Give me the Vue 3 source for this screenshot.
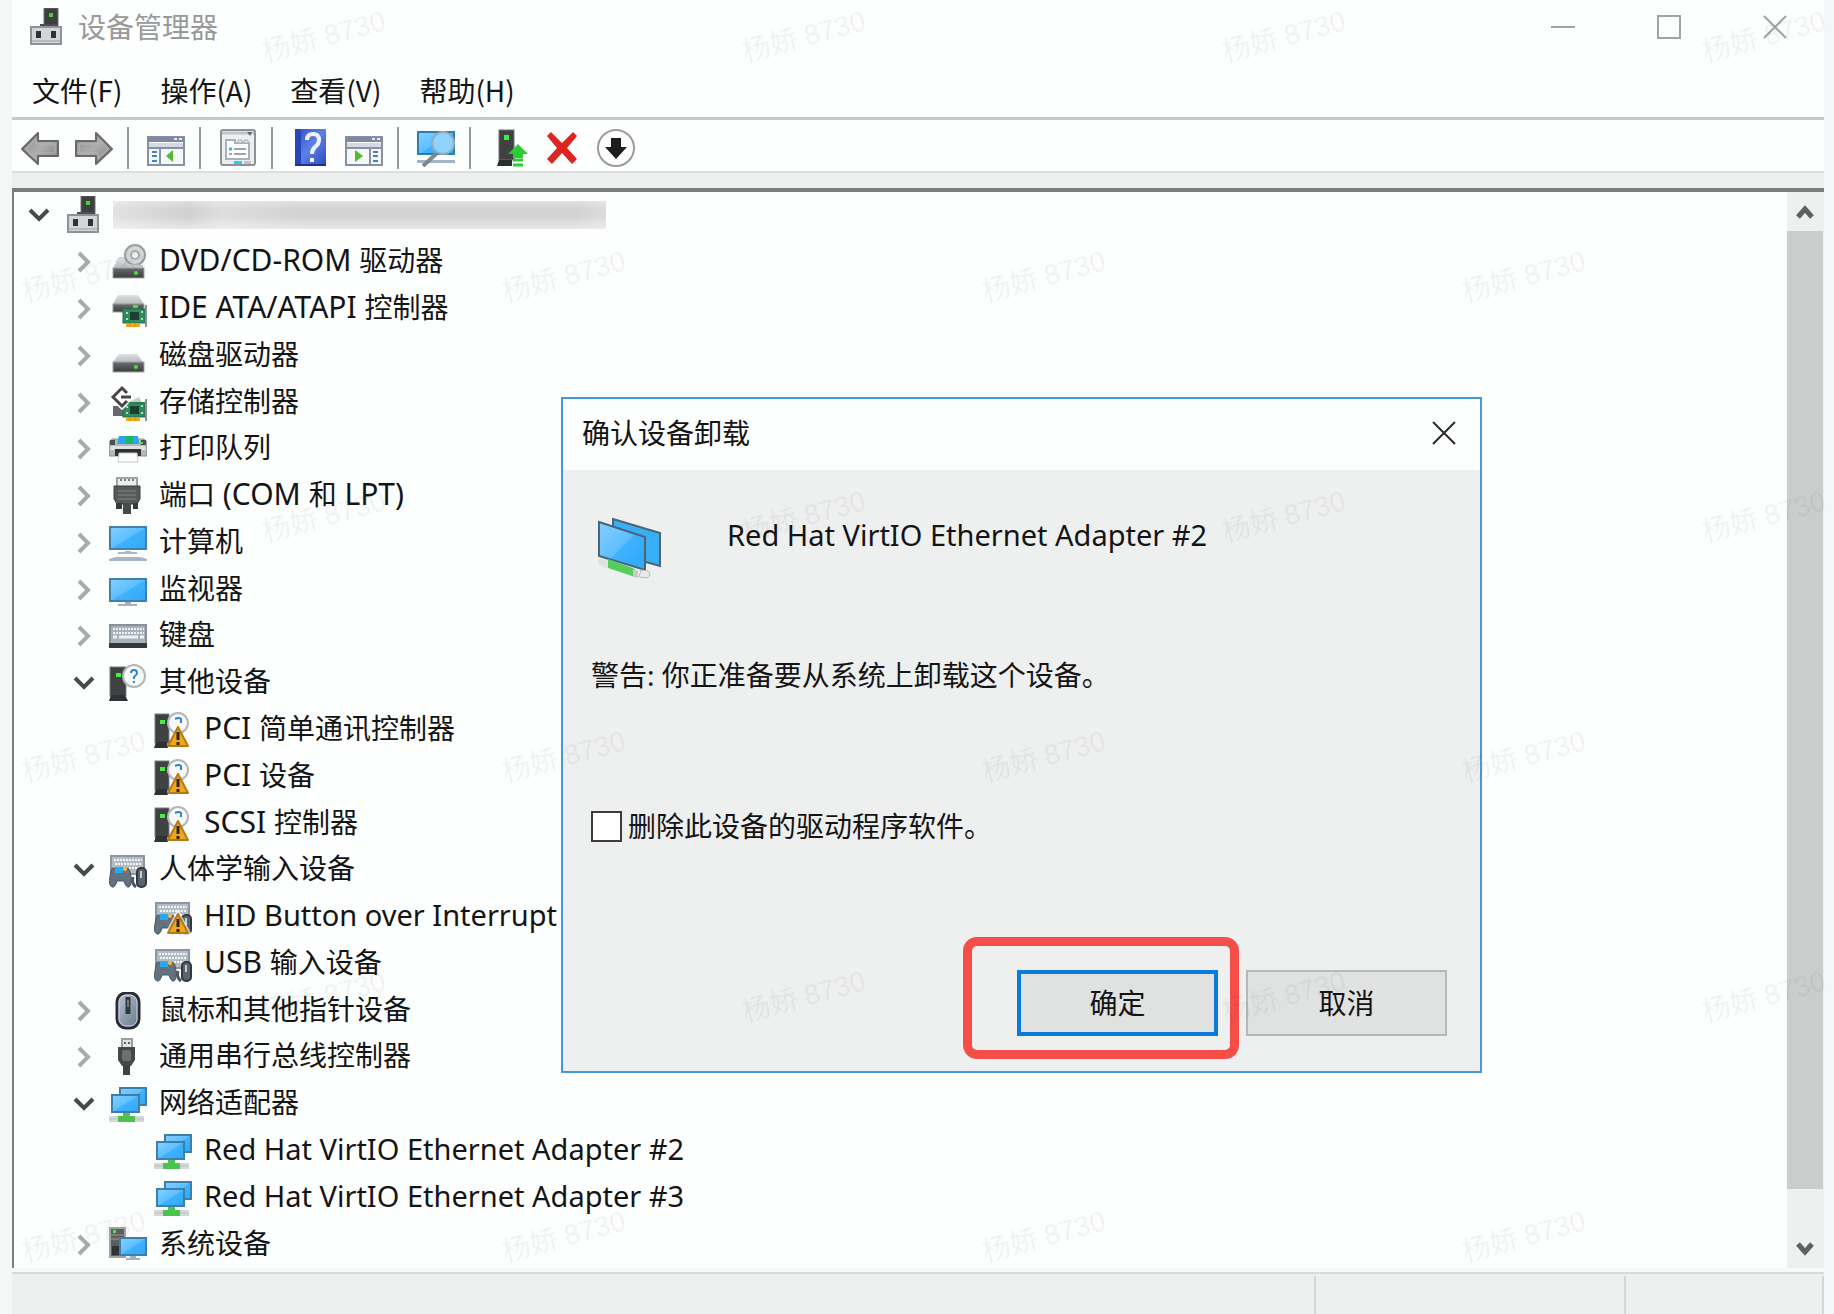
<script setup>
import { ref, computed } from 'vue'

const menus = ['文件(F)', '操作(A)', '查看(V)', '帮助(H)']

const toolGroups = [
  [
    { icon: 'back', label: '后退' },
    { icon: 'forward', label: '前进' },
  ],
  [{ icon: 'panel-left', label: '显示/隐藏控制台树' }],
  [{ icon: 'props', label: '属性' }],
  [
    { icon: 'help', label: '帮助' },
    { icon: 'panel-right', label: '显示/隐藏操作窗格' },
  ],
  [{ icon: 'scan', label: '扫描检测硬件改动' }],
  [
    { icon: 'update', label: '更新驱动程序' },
    { icon: 'remove', label: '卸载设备' },
    { icon: 'disable', label: '禁用设备' },
  ],
]

const nodes = ref([
  { level: 0, icon: 'server', open: true, masked: true },
  { level: 1, icon: 'dvd', text: 'DVD/CD-ROM 驱动器', open: false },
  { level: 1, icon: 'ide', text: 'IDE ATA/ATAPI 控制器', open: false },
  { level: 1, icon: 'disk', text: '磁盘驱动器', open: false },
  { level: 1, icon: 'storage', text: '存储控制器', open: false },
  { level: 1, icon: 'printer', text: '打印队列', open: false },
  { level: 1, icon: 'port', text: '端口 (COM 和 LPT)', open: false },
  { level: 1, icon: 'computer', text: '计算机', open: false },
  { level: 1, icon: 'monitor', text: '监视器', open: false },
  { level: 1, icon: 'keyboard', text: '键盘', open: false },
  { level: 1, icon: 'unknown', text: '其他设备', open: true },
  { level: 2, icon: 'unknown-warn', text: 'PCI 简单通讯控制器' },
  { level: 2, icon: 'unknown-warn', text: 'PCI 设备' },
  { level: 2, icon: 'unknown-warn', text: 'SCSI 控制器' },
  { level: 1, icon: 'hid', text: '人体学输入设备', open: true },
  { level: 2, icon: 'hid-warn', text: 'HID Button over Interrupt' },
  { level: 2, icon: 'hid', text: 'USB 输入设备' },
  { level: 1, icon: 'mouse', text: '鼠标和其他指针设备', open: false },
  { level: 1, icon: 'usb', text: '通用串行总线控制器', open: false },
  { level: 1, icon: 'network', text: '网络适配器', open: true },
  { level: 2, icon: 'network', text: 'Red Hat VirtIO Ethernet Adapter #2' },
  { level: 2, icon: 'network', text: 'Red Hat VirtIO Ethernet Adapter #3' },
  { level: 1, icon: 'system', text: '系统设备', open: false },
])

// Splits a label into Latin and Chinese runs so each gets its own type size.
function runs(text) {
  const parts = text.split(/([ -~]+)/).filter(Boolean)
  return parts.map((part) => {
    const latin = /^[ -~]+$/.test(part)
    return { part, kind: latin ? (parts.length > 1 ? 'acronym' : 'latin') : 'han' }
  })
}

const removeDriver = ref(false)

const marks = computed(() => {
  const list = []
  for (let row = 0; row < 6; row++) {
    for (let col = 0; col < 4; col++) {
      list.push({ x: col * 480 + (row % 2 ? 84 : 324), y: row * 240 + 37 })
    }
  }
  return list
})
</script>

<template>
  <div class="desktop">
    <svg class="sprite" width="0" height="0" aria-hidden="true">
      <defs>
        <linearGradient id="gScreen" x1="0" y1="0" x2="1" y2="1">
          <stop offset="0" stop-color="#86d0ff" />
          <stop offset="0.5" stop-color="#5dbfff" />
          <stop offset="0.52" stop-color="#3fb2fd" />
          <stop offset="1" stop-color="#2fa8f8" />
        </linearGradient>
        <linearGradient id="gLid" x1="0" y1="0" x2="0" y2="1">
          <stop offset="0" stop-color="#dfe1e3" />
          <stop offset="1" stop-color="#b9bcbe" />
        </linearGradient>
        <linearGradient id="gDark" x1="0" y1="0" x2="0" y2="1">
          <stop offset="0" stop-color="#6a6d6e" />
          <stop offset="1" stop-color="#3a3c3d" />
        </linearGradient>
        <linearGradient id="gArrow" x1="0" y1="0" x2="1" y2="1">
          <stop offset="0" stop-color="#8d8d8d" />
          <stop offset="0.5" stop-color="#adadad" />
          <stop offset="1" stop-color="#7c7c7c" />
        </linearGradient>
        <linearGradient id="gHelp" x1="0" y1="0" x2="1" y2="1">
          <stop offset="0" stop-color="#3450c4" />
          <stop offset="0.5" stop-color="#5c80e6" />
          <stop offset="1" stop-color="#2c49bb" />
        </linearGradient>
        <linearGradient id="gMouse" x1="0" y1="0" x2="1" y2="1">
          <stop offset="0" stop-color="#b9c5d4" />
          <stop offset="1" stop-color="#66778c" />
        </linearGradient>
      </defs>

      <symbol id="server" viewBox="0 0 38 38">
        <path d="M17 0h14v18H17z" fill="#3d3f40" stroke="#6e7071" />
        <path d="M13 16h18v3H13z" fill="#4b4d4e" />
        <rect x="22" y="5" width="4" height="4" fill="#3fd23a" />
        <rect x="4" y="19" width="30" height="17" fill="#d4d5d9" stroke="#8f9195" stroke-width="2" />
        <path d="M9 23h5v7H9zM24 23h5v7h-5z" fill="#303233" />
        <path d="M5 33h28" stroke="#b8babd" stroke-width="2" />
      </symbol>

      <symbol id="disk" viewBox="0 0 38 38">
        <path d="M10 17h18l6 8H4z" fill="url(#gLid)" />
        <rect x="4" y="25" width="31" height="10" fill="url(#gDark)" stroke="#a2a4a6" />
        <circle cx="27" cy="30" r="2" fill="#4be03e" />
      </symbol>

      <symbol id="dvd" viewBox="0 0 38 38">
        <path d="M10 14h18l6 11H4z" fill="url(#gLid)" />
        <circle cx="26" cy="12" r="10" fill="#d3d6d6" stroke="#9a9d9d" stroke-width="2" />
        <circle cx="26" cy="12" r="4" fill="#f2f4f4" stroke="#a9acac" stroke-width="2" />
        <path d="M18 21l16 1v3H16z" fill="#c3c6c7" />
        <rect x="4" y="25" width="31" height="10" fill="url(#gDark)" stroke="#a2a4a6" />
        <circle cx="27" cy="30" r="2" fill="#4be03e" />
      </symbol>

      <symbol id="card" viewBox="0 0 38 38">
        <rect x="14" y="19" width="22" height="14" fill="#2f8a5c" stroke="#23704a" />
        <rect x="21" y="22" width="9" height="8" fill="#1d3f33" />
        <path d="M17 22h2v2h-2zM32 21h2v2h-2zM17 28h2v2h-2zM32 28h2v2h-2z" fill="#a5dfc3" />
        <path d="M17 33h14v4H17z" fill="#f2a516" />
        <path d="M21 33v4M26 33v4" stroke="#d98a08" />
        <path d="M37 15v22" stroke="#8e9192" stroke-width="2" />
      </symbol>

      <symbol id="ide" viewBox="0 0 38 38">
        <path d="M9 5h20l6 9H4z" fill="url(#gLid)" />
        <rect x="4" y="14" width="31" height="8" fill="url(#gDark)" stroke="#9a9c9e" />
        <path d="M24 15h5v3h-5z" fill="#4be03e" />
        <use href="#card" width="38" height="38" />
      </symbol>

      <symbol id="storage" viewBox="0 0 38 38">
        <path d="M22 17l8-4 4 8H18z" fill="#c9cccd" />
        <path d="M4 22h12v10H4z" fill="#66696a" />
        <path d="M14 24l7-6h15v15H14z" fill="#2f8a5c" />
        <use href="#card" width="38" height="38" />
        <path d="M17 8l-4-4-9 9 9 9 5-5M13 12h9" fill="none" stroke="#fff" stroke-width="6" />
        <path d="M18 9l-5-5-9 9 9 9 5-5M12 13h10" fill="none" stroke="#454748" stroke-width="3" />
      </symbol>

      <symbol id="printer" viewBox="0 0 38 38">
        <path d="M3 9h32l3 3v14H0V12z" fill="#b5b8ba" stroke="#8e9193" />
        <path d="M1 10h5v5H1zM32 10h5v5h-5z" fill="#4d4f51" />
        <path d="M10 6h19l1 8H8z" fill="#2ea3f5" />
        <path d="M17 6h7v8h-7z" fill="#18b765" />
        <path d="M2 16h34l1 4H1z" fill="#dfe1e3" />
        <path d="M6 19h26v7H6z" fill="#2f3132" />
        <path d="M10 23h18l1 9H9z" fill="#fdfdfd" stroke="#c4c6c8" />
        <rect x="31" y="12" width="3" height="2" fill="#4be03e" />
      </symbol>

      <symbol id="port" viewBox="0 0 38 38">
        <rect x="8" y="1" width="20" height="9" fill="#eceeee" stroke="#a0a2a3" stroke-width="2" />
        <path d="M11 3h2M15 3h2M19 3h2M23 3h2" stroke="#808283" stroke-width="2" />
        <path d="M5 9h26v13l-3 5H8l-3-5z" fill="#57595a" stroke="#3d3f40" />
        <path d="M9 14h18M9 18h18M9 22h18" stroke="#858788" />
        <path d="M7 26h6v6H7zM24 26h5v6h-5z" fill="#37393a" />
        <path d="M14 26h8v11h-8z" fill="#484a4b" />
      </symbol>

      <symbol id="computer" viewBox="0 0 38 38">
        <rect x="1" y="3" width="36" height="22" fill="url(#gScreen)" stroke="#3f81a8" stroke-width="2" />
        <path d="M16 27h6v1h6v2H9v-2h7z" fill="#a9b6c5" />
        <path d="M7 33h24l7 2v2H0v-2z" fill="#a9b4c2" />
      </symbol>

      <symbol id="monitor" viewBox="0 0 38 38">
        <rect x="1" y="8" width="36" height="22" fill="url(#gScreen)" stroke="#3f81a8" stroke-width="2" />
        <path d="M16 31h6v2h6v2H9v-2h7z" fill="#a3b1c0" />
      </symbol>

      <symbol id="keyboard" viewBox="0 0 38 38">
        <rect x="1" y="8" width="36" height="20" fill="#aab2b9" stroke="#87919a" stroke-width="2" />
        <path d="M4 12h31M4 16h31" stroke="#eef1f3" stroke-width="2" stroke-dasharray="2 1" />
        <path d="M4 20h4M10 20h19M31 20h4" stroke="#eef1f3" stroke-width="3" />
        <path d="M0 26h38v5H0z" fill="#35393c" />
      </symbol>

      <symbol id="unknown" viewBox="0 0 38 38">
        <rect x="1" y="3" width="16" height="29" fill="#3f4142" stroke="#7b7d7e" />
        <rect x="7" y="9" width="5" height="4" fill="#46ee44" />
        <path d="M2 31h14l3 6H0z" fill="#2f3132" />
        <circle cx="25" cy="12" r="11" fill="#f7f8f8" stroke="#b4b6b7" stroke-width="2" />
        <path d="M22 9q0-3 3-3t3 3q0 2-3 4v2M25 17v2" fill="none" stroke="#2e86d0" stroke-width="2" />
      </symbol>

      <symbol id="warn" viewBox="0 0 38 38">
        <path d="M24 16l10 19H14z" fill="#f0a71e" stroke="#b67a10" stroke-width="2" stroke-linejoin="round" />
        <path d="M24 21v8M24 31v3" stroke="#2b2410" stroke-width="3" />
      </symbol>

      <symbol id="unknown-warn" viewBox="0 0 38 38">
        <rect x="1" y="3" width="14" height="29" fill="#3f4142" stroke="#7b7d7e" />
        <rect x="6" y="9" width="5" height="4" fill="#46ee44" />
        <path d="M2 31h11l1 6H0z" fill="#2f3132" />
        <circle cx="24" cy="12" r="10" fill="#f7f8f8" stroke="#b4b6b7" stroke-width="2" />
        <path d="M21 8q4-2 6 0v4" fill="none" stroke="#2e86d0" stroke-width="2" />
        <use href="#warn" width="38" height="38" />
      </symbol>

      <symbol id="hid" viewBox="0 0 38 38">
        <rect x="2" y="5" width="33" height="18" fill="#b4bcc3" stroke="#8c96a0" stroke-width="2" />
        <path d="M5 9h28M6 13h26M5 17h28" stroke="#f1f3f4" stroke-width="2" stroke-dasharray="2 1" />
        <path d="M4 17h14q3 0 4 9 1 8-2 10-3 1-5-6H8q-2 7-5 6-4-2-2-10 1-9 3-9z" fill="#64717e" stroke="#4b5762" />
        <rect x="6" y="16" width="8" height="6" fill="#29a8f8" />
        <circle cx="16" cy="18" r="2" fill="#f2c23a" />
        <circle cx="18" cy="21" r="1" fill="#e2503a" />
        <path d="M24 26q-2 6 3 10" fill="none" stroke="#4b5762" stroke-width="3" />
        <rect x="28" y="17" width="9" height="19" rx="4" fill="#596571" stroke="#33393f" stroke-width="2" />
        <path d="M32 20v7" stroke="#c7ced5" stroke-width="2" />
      </symbol>

      <symbol id="hid-warn" viewBox="0 0 38 38">
        <use href="#hid" width="38" height="38" />
        <path d="M24 11l14 26H10z" fill="#fff" fill-opacity="0.7" />
        <use href="#warn" width="38" height="38" />
      </symbol>

      <symbol id="mouse" viewBox="0 0 38 38">
        <rect x="8" y="1" width="22" height="35" rx="9" fill="url(#gMouse)" stroke="#2a2d30" stroke-width="3" />
        <rect x="10" y="3" width="18" height="31" rx="7" fill="none" stroke="#cfd8e2" />
        <path d="M19 5v17" stroke="#34383d" stroke-width="5" />
        <path d="M19 8v7" stroke="#70757b" stroke-width="2" />
      </symbol>

      <symbol id="usb" viewBox="0 0 38 38">
        <rect x="13" y="1" width="10" height="9" fill="#e2e4e4" stroke="#9b9d9e" stroke-width="2" />
        <path d="M15 5h2M19 5h2" stroke="#606263" stroke-width="2" />
        <path d="M9 9h17v13l-4 6h-9l-4-6z" fill="#464849" />
        <rect x="13" y="12" width="9" height="11" rx="2" fill="#6e7071" />
        <path d="M14 27h7v10h-7z" fill="#3f4142" />
      </symbol>

      <symbol id="network" viewBox="0 0 38 38">
        <rect x="11" y="3" width="26" height="17" fill="url(#gScreen)" stroke="#3c7fa7" stroke-width="2" />
        <rect x="3" y="10" width="27" height="17" fill="url(#gScreen)" stroke="#3c7fa7" stroke-width="2" />
        <path d="M0 31h35v6H0z" fill="#d5d7d8" />
        <path d="M0 34h35" stroke="#bdbfc0" />
        <path d="M14 28h7v3h5v6H9v-6h5z" fill="#4cc24f" />
      </symbol>

      <symbol id="system" viewBox="0 0 38 38">
        <rect x="1" y="2" width="15" height="29" fill="#5b5d5e" stroke="#a1a3a4" stroke-width="2" />
        <path d="M2 9h13M2 13h13" stroke="#9b9d9e" />
        <path d="M3 20h7v9H3z" fill="#303233" />
        <rect x="4" y="4" width="3" height="3" fill="#46ee44" />
        <rect x="11" y="12" width="26" height="17" fill="url(#gScreen)" stroke="#3c7fa7" stroke-width="2" />
        <path d="M21 30h6v2h4v2H17v-2h4z" fill="#a3b1c0" />
      </symbol>

      <symbol id="back" viewBox="0 0 38 38">
        <path d="M1 20L17 4v8h20v15H17v8z" fill="url(#gArrow)" stroke="#686868" stroke-width="2" stroke-linejoin="round" />
        <path d="M5 20l10-10v5h19v9H15v6z" fill="none" stroke="#b4b4b4" />
      </symbol>
      <symbol id="forward" viewBox="0 0 38 38">
        <path d="M37 20L21 4v8H1v15h20v8z" fill="url(#gArrow)" stroke="#686868" stroke-width="2" stroke-linejoin="round" />
        <path d="M33 20L23 10v5H4v9h19v6z" fill="none" stroke="#b4b4b4" />
      </symbol>
      <symbol id="panel-left" viewBox="0 0 38 38">
        <rect x="1" y="8" width="36" height="28" fill="#f6f7f8" stroke="#8891a3" stroke-width="2" />
        <path d="M1 8h36v5H1z" fill="#7f8a9f" />
        <path d="M27 10h3M32 10h3" stroke="#e6eaf0" stroke-width="2" />
        <path d="M2 14h34v4H2z" fill="#d4dae3" />
        <path d="M1 19h36M13 19v17" stroke="#8891a3" stroke-width="2" />
        <path d="M5 23h5M5 27h5M5 32h5" stroke="#3f82cc" stroke-width="2" />
        <path d="M26 21v12l-7-6z" fill="#4dbb2d" />
      </symbol>
      <symbol id="panel-right" viewBox="0 0 38 38">
        <rect x="1" y="8" width="36" height="28" fill="#f6f7f8" stroke="#8891a3" stroke-width="2" />
        <path d="M1 8h36v5H1z" fill="#7f8a9f" />
        <path d="M27 10h3M32 10h3" stroke="#e6eaf0" stroke-width="2" />
        <path d="M2 14h34v4H2z" fill="#d4dae3" />
        <path d="M1 19h36M25 19v17" stroke="#8891a3" stroke-width="2" />
        <path d="M28 23h5M28 27h5M28 32h5" stroke="#3f82cc" stroke-width="2" />
        <path d="M10 21v12l8-6z" fill="#4dbb2d" />
      </symbol>
      <symbol id="props" viewBox="0 0 38 38">
        <rect x="2" y="1" width="34" height="35" rx="2" fill="#eceff0" stroke="#8e9296" stroke-width="2" />
        <path d="M3 4h32" stroke="#c0c5ca" stroke-width="3" />
        <path d="M28 3h5l-2 4z" fill="#4a6a8c" />
        <path d="M7 13V11h9v3h14v16H7z" fill="#fff" stroke="#aab0bb" stroke-width="2" />
        <path d="M19 11h4v3h-4zM25 11h4v3h-4z" fill="#dfe3e8" stroke="#aab0bb" />
        <path d="M15 20h12M15 25h12" stroke="#a0a4a8" stroke-width="2" />
        <path d="M10 20h3" stroke="#28b8ee" stroke-width="3" />
        <path d="M10 25h3" stroke="#a0a4a8" stroke-width="2" />
        <path d="M15 32h8v3h-8z" fill="#23cdf7" />
        <path d="M25 32h7v3h-7z" fill="#bfc4c8" />
      </symbol>
      <symbol id="help" viewBox="0 0 38 38">
        <rect x="4" y="0" width="31" height="37" fill="url(#gHelp)" />
        <path d="M4 0h6v37H4z" fill="#2846b8" />
        <path d="M4 36h31" stroke="#1b3290" stroke-width="2" />
        <path d="M16 11q0-6 6-6t6 6q0 4-4 7-3 3-3 7M21 29v4" fill="none" stroke="#eef2ff" stroke-width="4" />
      </symbol>
      <symbol id="scan" viewBox="0 0 38 38">
        <rect x="1" y="3" width="36" height="22" fill="url(#gScreen)" stroke="#2b7fae" stroke-width="2" />
        <path d="M0 31h38v3H0z" fill="#a3b5c8" />
        <path d="M19 25L6 37" stroke="#7d8894" stroke-width="4" />
        <circle cx="26" cy="14" r="11" fill="#8fd3fc" stroke="#93aabb" stroke-width="2" />
      </symbol>
      <symbol id="update" viewBox="0 0 38 38">
        <rect x="10" y="1" width="15" height="30" fill="#3f4142" stroke="#6f7172" />
        <rect x="15" y="6" width="5" height="5" fill="#3cf03c" />
        <path d="M10 31h13v6H8z" fill="#2b2d2e" />
        <path d="M29 15l10 10h-5v4H24v-4h-5z" fill="#2ccb36" />
        <path d="M24 31h10M24 36h10" stroke="#2ccb36" stroke-width="3" />
      </symbol>
      <symbol id="remove" viewBox="0 0 38 38">
        <path d="M8 3l11 11L30 3l4 4-10 12 10 11-5 5-10-11L9 35l-5-5 10-11L4 7z" fill="#de2420" />
      </symbol>
      <symbol id="disable" viewBox="0 0 38 38">
        <circle cx="19" cy="19" r="18" fill="#fdfdfd" stroke="#9b9b9b" stroke-width="2" />
        <path d="M14 9h10v9h6L19 30 8 18h6z" fill="#1c1c1c" />
      </symbol>
      <symbol id="adapter-big" viewBox="0 0 66 62">
        <path d="M16 1l47 14v33L16 35z" fill="#3aaef5" stroke="#4b6577" stroke-width="2" />
        <path d="M2 4l46 15v33L2 38z" fill="url(#gScreen)" stroke="#4b6577" stroke-width="2" />
        <path d="M3 40l8 3v8l-8-4q-4-4 0-7z" fill="#dfe2e3" />
        <path d="M44 52l7 1q4 4-1 7l-8-1z" fill="#e8eaea" stroke="#b9bcbd" />
        <path d="M11 41l27 10v8l-27-9z" fill="#55cc5b" />
        <path d="M36 51l5 2v7l-5-2z" fill="#c6cac9" />
      </symbol>
    </svg>

    <main class="window">
      <header class="titlebar">
        <svg class="icon"><use href="#server" /></svg>
        <h1>设备管理器</h1>
        <div class="controls">
          <button type="button" aria-label="最小化">
            <svg viewBox="0 0 24 24"><path d="M0 12h24" /></svg>
          </button>
          <button type="button" aria-label="最大化">
            <svg viewBox="0 0 24 24"><path d="M1 1h22v22H1z" /></svg>
          </button>
          <button type="button" aria-label="关闭">
            <svg viewBox="0 0 24 24"><path d="M1 1l22 22M23 1L1 23" /></svg>
          </button>
        </div>
      </header>

      <nav class="menubar">
        <button v-for="m in menus" :key="m" type="button">{{ m }}</button>
      </nav>

      <div class="toolbar">
        <div v-for="(group, i) in toolGroups" :key="i" class="group">
          <button v-for="t in group" :key="t.icon" type="button" :aria-label="t.label">
            <svg class="icon"><use :href="'#' + t.icon" /></svg>
          </button>
        </div>
      </div>

      <section class="pane">
        <ul class="tree">
          <li v-for="(n, i) in nodes" :key="i" :class="'level-' + n.level">
            <button
              v-if="n.open !== undefined"
              type="button"
              class="twisty"
              :class="{ open: n.open }"
              :aria-label="n.open ? '折叠' : '展开'"
            >
              <svg v-if="n.open" viewBox="0 0 24 24"><path d="M3 7l9 9 9-9" /></svg>
              <svg v-else viewBox="0 0 24 24"><path d="M7 3l9 9-9 9" /></svg>
            </button>
            <span v-else class="twisty"></span>
            <svg class="icon"><use :href="'#' + n.icon" /></svg>
            <span v-if="n.masked" class="mask"></span>
            <span v-else class="label"><span v-for="(r, k) in runs(n.text)" :key="k" :class="r.kind">{{ r.part }}</span></span>
          </li>
        </ul>
        <div class="scrollbar">
          <button type="button" aria-label="向上滚动">
            <svg viewBox="0 0 18 14"><path d="M2 12l7-8 7 8" /></svg>
          </button>
          <div class="track"><div class="thumb"></div></div>
          <button type="button" aria-label="向下滚动">
            <svg viewBox="0 0 18 14"><path d="M2 2l7 8 7-8" /></svg>
          </button>
        </div>
      </section>

      <footer class="statusbar">
        <span class="cell wide"></span>
        <span class="cell mid"></span>
        <span class="cell end"></span>
      </footer>
    </main>

    <section class="dialog" role="dialog" aria-labelledby="dialog-title">
      <header>
        <h2 id="dialog-title">确认设备卸载</h2>
        <button type="button" aria-label="关闭">
          <svg viewBox="0 0 24 24"><path d="M1 1l22 22M23 1L1 23" /></svg>
        </button>
      </header>
      <form class="body" @submit.prevent>
        <div class="device">
          <svg class="big"><use href="#adapter-big" /></svg>
          <p class="latin">Red Hat VirtIO Ethernet Adapter #2</p>
        </div>
        <p class="warning">警告: 你正准备要从系统上卸载这个设备。</p>
        <label class="check">
          <input v-model="removeDriver" type="checkbox" />
          <span>删除此设备的驱动程序软件。</span>
        </label>
        <div class="actions">
          <div class="spot"><button type="submit" class="primary">确定</button></div>
          <button type="button">取消</button>
        </div>
      </form>
    </section>

    <div class="watermarks" aria-hidden="true">
      <span v-for="(m, i) in marks" :key="i" :style="{ left: m.x + 'px', top: m.y + 'px' }">杨娇 8730</span>
    </div>
  </div>
</template>

<style>
body {
  margin: 0;
  background: #f4f6f8;
}
</style>

<style scoped>
.desktop {
  position: relative;
  box-sizing: border-box;
  display: flex;
  min-height: 100vh;
  padding: 0 10px 0 12px;
  overflow: hidden;
  color: #141414;
  font-family: "Noto Sans", "Noto Sans CJK SC", sans-serif;
  font-size: 28px;
  line-height: 34px;
}
.sprite {
  position: absolute;
}
.window {
  flex: 1;
  display: flex;
  flex-direction: column;
  background: #fdfefe;
}
h1, h2, p, ul {
  margin: 0;
  padding: 0;
  font-size: inherit;
  font-weight: 400;
}
button {
  margin: 0;
  padding: 0;
  border: 0;
  background: none;
  color: inherit;
  font: inherit;
}
.icon {
  flex: none;
  display: block;
  width: 38px;
  height: 38px;
}
.latin {
  font-size: 29px;
}
.acronym {
  font-size: 30px;
}

.titlebar {
  display: flex;
  align-items: center;
  height: 54px;
  margin-bottom: 8px;
  padding-left: 15px;
}
h1 {
  margin-left: 13px;
  color: #999;
}
.controls {
  display: flex;
  gap: 8px;
  margin-left: auto;
}
.controls button {
  display: flex;
  align-items: center;
  justify-content: center;
  width: 98px;
  height: 52px;
}
.controls svg,
.dialog header svg {
  width: 24px;
  height: 24px;
  fill: none;
  stroke: #a2a4a4;
  stroke-width: 2;
}

.menubar {
  display: flex;
  align-items: center;
  gap: 38px;
  height: 55px;
  padding-left: 20px;
  border-bottom: 3px solid #c6c9c9;
  font-family: "Noto Sans CJK SC", sans-serif;
}

.toolbar {
  box-sizing: border-box;
  display: flex;
  align-items: center;
  height: 53px;
  padding: 4px 0 0 9px;
  border-bottom: 2px solid #dddfdf;
}
.group {
  display: flex;
  align-items: center;
  gap: 16px;
  height: 42px;
  padding-right: 14px;
  border-right: 2px solid #979999;
}
.group + .group {
  padding-left: 18px;
}
.group:last-child {
  border-right: 0;
}

.pane {
  flex: 1;
  display: flex;
  margin-top: 15px;
  border-top: 4px solid #7b7d7d;
  border-left: 2px solid #7b7d7d;
  box-shadow: 0 -15px 0 4px #eeefef;
  clip-path: inset(-15px 0 0 0);
}
.tree {
  flex: 1;
  display: grid;
  grid-auto-rows: minmax(46px, 1fr);
  list-style: none;
  background: #fdfefe;
}
.tree li {
  display: flex;
  align-items: center;
  padding-left: 13px;
}
.tree .level-1 {
  padding-left: 58px;
}
.tree .level-2 {
  padding-left: 103px;
}
.twisty {
  flex: none;
  display: block;
  width: 24px;
  height: 24px;
  margin-right: 13px;
}
.twisty svg {
  display: block;
  fill: none;
  stroke: #a9abab;
  stroke-width: 4;
}
.twisty.open svg {
  stroke: #484a4a;
}
.label {
  margin-left: 12px;
  padding-bottom: 4px;
  white-space: pre;
}
.mask {
  width: 493px;
  height: 28px;
  margin-left: 11px;
  background:
    linear-gradient(180deg, rgba(255, 255, 255, 0.3), rgba(255, 255, 255, 0) 30% 55%, rgba(255, 255, 255, 0.5)),
    linear-gradient(90deg, #e2e2e2, #d0d0d0 15%, #dedede 22%, #d2d2d2 38% 94%, #dcdcdc);
}

.scrollbar {
  display: flex;
  flex-direction: column;
  width: 36px;
  padding-right: 1px;
  background: #eeefef;
}
.scrollbar button {
  display: flex;
  align-items: center;
  justify-content: center;
  height: 39px;
}
.scrollbar button svg {
  width: 18px;
  height: 14px;
  fill: none;
  stroke: #5f6161;
  stroke-width: 5;
}
.track {
  flex: 1;
}
.thumb {
  height: 96%;
  background: #cbcdcd;
}

.statusbar {
  display: flex;
  height: 38px;
  margin-top: 4px;
  padding-top: 2px;
  background: #eeefef;
  border-top: 2px solid #d9dbdb;
  box-shadow: 0 -4px 0 #f8f9f9, 0 -6px 0 #e3e5e5;
}
.cell {
  border-right: 2px solid #d4d6d6;
}
.wide {
  flex: 1;
}
.mid {
  width: 308px;
}
.end {
  width: 196px;
}

.dialog {
  position: absolute;
  top: 397px;
  left: 561px;
  box-sizing: border-box;
  width: 921px;
  border: 2px solid #3f9ae0;
  background: #eeefef;
}
.dialog header {
  box-sizing: border-box;
  display: flex;
  align-items: center;
  justify-content: space-between;
  height: 71px;
  padding: 0 24px 3px 19px;
  background: #fdfefe;
}
.dialog header svg {
  display: block;
  stroke: #2c2c2c;
}
.body {
  padding: 48px 33px 35px 28px;
}
.device {
  display: flex;
  gap: 64px;
  padding-left: 6px;
}
.big {
  width: 66px;
  height: 62px;
}
.warning {
  margin-top: 78px;
}
.check {
  display: flex;
  align-items: center;
  gap: 6px;
  margin-top: 117px;
}
.check input {
  appearance: none;
  box-sizing: border-box;
  width: 31px;
  height: 31px;
  margin: 0;
  border: 2px solid #3c3c3c;
  background: #fff;
}
.check input:checked {
  background: #0078d7;
}
.actions {
  display: flex;
  justify-content: flex-end;
  gap: 28px;
  margin-top: 127px;
}
.actions button {
  display: block;
  box-sizing: border-box;
  width: 201px;
  height: 66px;
  border: 2px solid #b6b8b8;
  background: #e0e1e1;
}
.actions .primary {
  border: 4px solid #0a7bda;
}
.spot {
  position: relative;
}
.spot::after {
  content: "";
  position: absolute;
  inset: -33px -21px -23px -54px;
  border: 9px solid #f54d47;
  border-radius: 14px;
  pointer-events: none;
}

.watermarks {
  position: absolute;
  inset: 0;
  overflow: hidden;
  color: rgba(60, 70, 90, 0.08);
  font-family: "Liberation Sans", "Noto Sans CJK SC", sans-serif;
  pointer-events: none;
}
.watermarks span {
  position: absolute;
  white-space: nowrap;
  transform: translate(-50%, -50%) rotate(-15deg);
}
</style>
